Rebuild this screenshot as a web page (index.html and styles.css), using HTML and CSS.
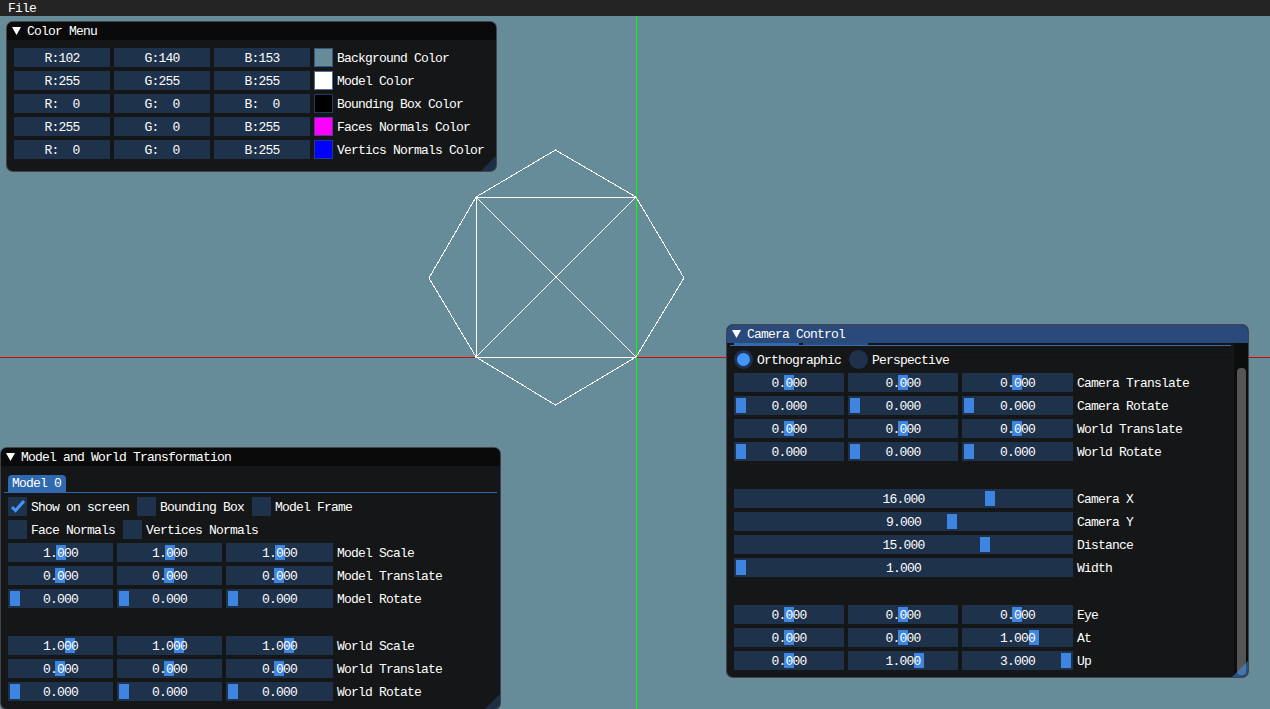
FILE: index.html
```html
<!DOCTYPE html>
<html>
<head>
	<meta charset="UTF-8">
	<meta name="viewport" content="width=device-width, initial-scale=1.0">
	<title>Mesh Viewer</title>
	<link rel="stylesheet" href="styles.css">
</head>
<body>
	<svg class="scene" width="1270" height="709" viewBox="0 0 1270 709">
		<line class="axis-x" x1="0" y1="357.5" x2="1270" y2="357.5"></line>
		<line class="axis-y" x1="636.5" y1="0" x2="636.5" y2="709"></line>
		<polygon class="mesh" points="555.5,150 636,197 684,278 636,357 555.5,405 476,357 429,278 476,197"></polygon>
		<polyline class="mesh" points="476,357 476,197 636,197 476,357 636,357"></polyline>
		<line class="mesh" x1="476" y1="197" x2="636" y2="357"></line>
		<line class="mesh" x1="636" y1="197" x2="476" y2="357"></line>
	</svg>

	<div class="menubar"><span>File</span></div>

	<!-- color menu -->
	<div class="window color-window">
		<div class="titlebar"><svg class="arrow" width="9" height="8" viewBox="0 0 9 8"><polygon points="0,0 9,0 4.5,8"></polygon></svg>Color Menu</div>
		<div class="body">
			<div class="row color-row"><div class="frame">R:102</div><div class="frame">G:140</div><div class="frame">B:153</div><div class="swatch swatch-bg"></div><div class="label">Background Color</div></div>
			<div class="row color-row"><div class="frame">R:255</div><div class="frame">G:255</div><div class="frame">B:255</div><div class="swatch swatch-white"></div><div class="label">Model Color</div></div>
			<div class="row color-row"><div class="frame">R:  0</div><div class="frame">G:  0</div><div class="frame">B:  0</div><div class="swatch swatch-black"></div><div class="label">Bounding Box Color</div></div>
			<div class="row color-row"><div class="frame">R:255</div><div class="frame">G:  0</div><div class="frame">B:255</div><div class="swatch swatch-magenta"></div><div class="label">Faces Normals Color</div></div>
			<div class="row color-row"><div class="frame">R:  0</div><div class="frame">G:  0</div><div class="frame">B:255</div><div class="swatch swatch-blue"></div><div class="label">Vertics Normals Color</div></div>
		</div>
		<div class="grip"></div>
	</div>

	<!-- model window -->
	<div class="window model-window">
		<div class="titlebar"><svg class="arrow" width="9" height="8" viewBox="0 0 9 8"><polygon points="0,0 9,0 4.5,8"></polygon></svg>Model and World Transformation</div>
		<div class="body">
			<div class="tabbar"><div class="tab">Model 0</div></div>
			<div class="row check-row">
				<div class="check"><svg width="19" height="19" viewBox="0 0 19 19"><polyline points="4,10 7.5,13.5 16,4"></polyline></svg></div><div class="label">Show on screen</div>
				<div class="check"></div><div class="label">Bounding Box</div>
				<div class="check"></div><div class="label">Model Frame</div>
			</div>
			<div class="row check-row">
				<div class="check"></div><div class="label">Face Normals</div>
				<div class="check"></div><div class="label">Vertices Normals</div>
			</div>
			<div class="row model-row"><div class="frame"><i class="grab" style="left:48px"></i><span>1.000</span></div><div class="frame"><i class="grab" style="left:48px"></i><span>1.000</span></div><div class="frame"><i class="grab" style="left:49px"></i><span>1.000</span></div><div class="label">Model Scale</div></div>
			<div class="row model-row"><div class="frame"><i class="grab" style="left:47px"></i><span>0.000</span></div><div class="frame"><i class="grab" style="left:47px"></i><span>0.000</span></div><div class="frame"><i class="grab" style="left:48px"></i><span>0.000</span></div><div class="label">Model Translate</div></div>
			<div class="row model-row"><div class="frame"><i class="grab" style="left:2px"></i><span>0.000</span></div><div class="frame"><i class="grab" style="left:2px"></i><span>0.000</span></div><div class="frame"><i class="grab" style="left:2px"></i><span>0.000</span></div><div class="label">Model Rotate</div></div>
			<div class="row model-row section"><div class="frame"><i class="grab" style="left:57px"></i><span>1.000</span></div><div class="frame"><i class="grab" style="left:57px"></i><span>1.000</span></div><div class="frame"><i class="grab" style="left:58px"></i><span>1.000</span></div><div class="label">World Scale</div></div>
			<div class="row model-row"><div class="frame"><i class="grab" style="left:47px"></i><span>0.000</span></div><div class="frame"><i class="grab" style="left:47px"></i><span>0.000</span></div><div class="frame"><i class="grab" style="left:48px"></i><span>0.000</span></div><div class="label">World Translate</div></div>
			<div class="row model-row"><div class="frame"><i class="grab" style="left:2px"></i><span>0.000</span></div><div class="frame"><i class="grab" style="left:2px"></i><span>0.000</span></div><div class="frame"><i class="grab" style="left:2px"></i><span>0.000</span></div><div class="label">World Rotate</div></div>
		</div>
		<div class="grip"></div>
	</div>

	<!-- camera window -->
	<div class="window camera-window">
		<div class="titlebar titlebar-active"><svg class="arrow" width="9" height="8" viewBox="0 0 9 8"><polygon points="0,0 9,0 4.5,8"></polygon></svg>Camera Control</div>
		<div class="tabstrip"><div class="stub stub-active"></div><div class="stub"></div></div>
		<div class="body camera-body">
			<div class="row radio-row">
				<div class="radio radio-on"></div><div class="label">Orthographic</div>
				<div class="radio"></div><div class="label">Perspective</div>
			</div>
			<div class="row camera-row"><div class="frame"><i class="grab" style="left:50px"></i><span>0.000</span></div><div class="frame"><i class="grab" style="left:50px"></i><span>0.000</span></div><div class="frame"><i class="grab" style="left:50px"></i><span>0.000</span></div><div class="label">Camera Translate</div></div>
			<div class="row camera-row"><div class="frame"><i class="grab" style="left:2px"></i><span>0.000</span></div><div class="frame"><i class="grab" style="left:2px"></i><span>0.000</span></div><div class="frame"><i class="grab" style="left:2px"></i><span>0.000</span></div><div class="label">Camera Rotate</div></div>
			<div class="row camera-row"><div class="frame"><i class="grab" style="left:50px"></i><span>0.000</span></div><div class="frame"><i class="grab" style="left:50px"></i><span>0.000</span></div><div class="frame"><i class="grab" style="left:50px"></i><span>0.000</span></div><div class="label">World Translate</div></div>
			<div class="row camera-row"><div class="frame"><i class="grab" style="left:2px"></i><span>0.000</span></div><div class="frame"><i class="grab" style="left:2px"></i><span>0.000</span></div><div class="frame"><i class="grab" style="left:2px"></i><span>0.000</span></div><div class="label">World Rotate</div></div>
			<div class="row wide-row section"><div class="frame"><i class="grab" style="left:251px"></i><span>16.000</span></div><div class="label">Camera X</div></div>
			<div class="row wide-row"><div class="frame"><i class="grab" style="left:213px"></i><span>9.000</span></div><div class="label">Camera Y</div></div>
			<div class="row wide-row"><div class="frame"><i class="grab" style="left:246px"></i><span>15.000</span></div><div class="label">Distance</div></div>
			<div class="row wide-row"><div class="frame"><i class="grab" style="left:2px"></i><span>1.000</span></div><div class="label">Width</div></div>
			<div class="row camera-row section"><div class="frame"><i class="grab" style="left:50px"></i><span>0.000</span></div><div class="frame"><i class="grab" style="left:50px"></i><span>0.000</span></div><div class="frame"><i class="grab" style="left:50px"></i><span>0.000</span></div><div class="label">Eye</div></div>
			<div class="row camera-row"><div class="frame"><i class="grab" style="left:50px"></i><span>0.000</span></div><div class="frame"><i class="grab" style="left:50px"></i><span>0.000</span></div><div class="frame"><i class="grab" style="left:67px"></i><span>1.000</span></div><div class="label">At</div></div>
			<div class="row camera-row"><div class="frame"><i class="grab" style="left:50px"></i><span>0.000</span></div><div class="frame"><i class="grab" style="left:66px"></i><span>1.000</span></div><div class="frame"><i class="grab" style="left:99px"></i><span>3.000</span></div><div class="label">Up</div></div>
		</div>
		<div class="scrollbar"><div class="scrollbar-thumb"></div></div>
		<div class="grip grip-hot"></div>
	</div>
</body>
</html>
```

FILE: styles.css
```css
html, body {
	margin: 0;
	height: 100%;
	overflow: hidden;
}

body {
	position: relative;
	width: 1270px;
	height: 709px;
	background-color: #668c99;
	color: #fff;
	font-family: "Liberation Mono", "DejaVu Sans Mono", monospace;
	font-size: 13px;
	letter-spacing: -0.8px;
	line-height: 21px;
}

.scene {
	position: absolute;
	left: 0;
	top: 0;
	shape-rendering: crispEdges;
}

.axis-x {
	stroke: #e00000;
	stroke-width: 1;
}

.axis-y {
	stroke: #00ff00;
	stroke-width: 1;
}

.mesh {
	fill: none;
	stroke: #fff;
	stroke-width: 1;
}

.menubar {
	position: absolute;
	left: 0;
	top: 0;
	width: 100%;
	height: 16px;
	padding-left: 8px;
	box-sizing: border-box;
	background-color: #242424;
	line-height: 17px;
}

.window {
	position: absolute;
	box-sizing: border-box;
	border: 1px solid rgba(110, 110, 128, 0.5);
	border-radius: 7px;
	overflow: hidden;
	background-color: rgba(15, 15, 15, 0.94);
}

.color-window {
	left: 6px;
	top: 21px;
	width: 491px;
	height: 151px;
}

.model-window {
	left: 0;
	top: 447px;
	width: 501px;
	height: 263px;
}

.camera-window {
	left: 726px;
	top: 324px;
	width: 523px;
	height: 354px;
}

.titlebar {
	display: flex;
	align-items: flex-start;
	height: 18px;
	padding-left: 5px;
	background-color: #0a0a0a;
	line-height: 20px;
}

.titlebar-active {
	background-color: #294a7a;
}

.arrow {
	align-self: center;
	margin-right: 6px;
	fill: #fff;
}

.body {
	padding: 8px 7px 0;
}

.camera-body {
	padding-top: 4px;
}

.row {
	display: grid;
	column-gap: 4px;
	height: 19px;
	margin-bottom: 4px;
}

.color-row {
	grid-template-columns: 96px 96px 96px 19px auto;
}

.model-row {
	grid-template-columns: 105px 105px 107px auto;
}

.camera-row {
	grid-template-columns: 110px 110px 111px auto;
}

.wide-row {
	grid-template-columns: 339px auto;
}

.check-row {
	display: flex;
}

.radio-row {
	display: flex;
}

.section {
	margin-top: 28px;
}

.frame {
	position: relative;
	height: 19px;
	background-color: rgba(41, 74, 122, 0.54);
	text-align: center;
	white-space: pre;
}

.frame span {
	position: relative;
}

.grab {
	position: absolute;
	top: 2px;
	width: 10px;
	height: 15px;
	background-color: #3d85e0;
}

.label {
	white-space: pre;
}

.swatch {
	height: 19px;
	box-sizing: border-box;
	border: 1px solid rgba(41, 74, 122, 0.8);
}

.swatch-bg {
	background-color: #668c99;
}

.swatch-white {
	background-color: #fff;
}

.swatch-black {
	background-color: #000;
}

.swatch-magenta {
	background-color: #f0f;
}

.swatch-blue {
	background-color: #00f;
}

.check {
	width: 19px;
	height: 19px;
	background-color: rgba(41, 74, 122, 0.54);
}

.check svg {
	display: block;
	fill: none;
	stroke: #4296fa;
	stroke-width: 3;
}

.check + .label,
.radio + .label {
	margin-right: 4px;
}

.tabbar {
	height: 17px;
	margin: 1px -4px 4px;
	padding-left: 4px;
	border-bottom: 1px solid #3069b0;
}

.tab {
	display: inline-block;
	vertical-align: top;
	height: 17px;
	padding: 0 5px 0 4px;
	border-radius: 4px 4px 0 0;
	background-color: #3069b0;
	line-height: 18px;
}

.tabstrip {
	display: flex;
	gap: 4px;
	width: 497px;
	height: 2px;
	margin-left: 3px;
	padding-left: 4px;
	border-bottom: 1px solid #3a6ba8;
}

.stub {
	width: 65px;
	height: 2px;
	background-color: #2b4e80;
}

.stub-active {
	background-color: #3069b0;
}

.radio {
	width: 19px;
	height: 19px;
	box-sizing: border-box;
	border-radius: 50%;
	background-color: rgba(41, 74, 122, 0.54);
}

.radio-on {
	border: 3px solid #1e3151;
	background-color: #4296fa;
}

.scrollbar {
	position: absolute;
	right: 0;
	top: 18px;
	bottom: 0;
	width: 14px;
	background-color: rgba(5, 5, 5, 0.53);
}

.scrollbar-thumb {
	position: absolute;
	left: 3px;
	top: 25px;
	bottom: 2px;
	width: 9px;
	border-radius: 4px;
	background-color: #555;
}

.grip {
	position: absolute;
	right: 0;
	bottom: 0;
	width: 15px;
	height: 15px;
	background-color: rgba(66, 150, 250, 0.2);
	clip-path: polygon(100% 0, 100% 100%, 0 100%);
}

.grip-hot {
	width: 16px;
	height: 16px;
	background-color: rgba(66, 150, 250, 0.5);
}
```
